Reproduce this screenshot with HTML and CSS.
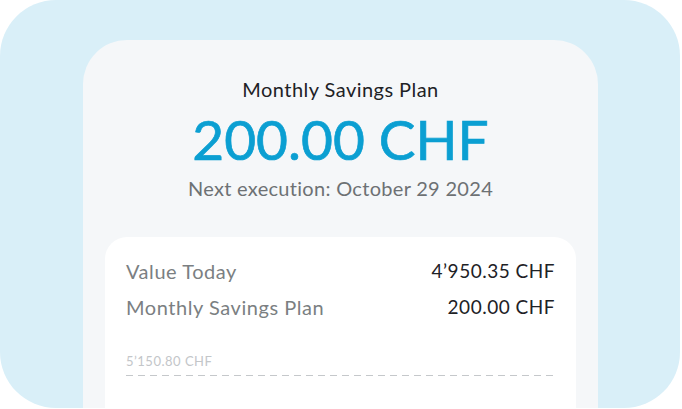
FILE: index.html
```html
<!DOCTYPE html>
<html>
<head>
<meta charset="utf-8">
<link rel="stylesheet" href="styles.css">
</head>
<body>
<div class="frame">
  <div class="phone">
    <div class="header">
      <div class="title">Monthly Savings Plan</div>
      <div class="amount">200.00 CHF</div>
      <div class="next">Next execution: October 29 2024</div>
    </div>
    <div class="card">
      <div class="row">
        <span class="label">Value Today</span>
        <span class="value">4’950.35 CHF</span>
      </div>
      <div class="row">
        <span class="label">Monthly Savings Plan</span>
        <span class="value">200.00 CHF</span>
      </div>
      <div class="chart">
        <div class="chart-label">5’150.80 CHF</div>
        <div class="dash"></div>
      </div>
    </div>
  </div>
</div>
</body>
</html>
```
FILE: styles.css
```css
* { box-sizing: border-box; }
html, body { margin: 0; padding: 0; background: #ffffff; }
body {
  font-family: "Lato", "Open Sans", sans-serif;
  width: 682px;
  height: 409px;
  overflow: hidden;
}
.frame {
  width: 680px;
  height: 408px;
  background: #d9eff8;
  border-radius: 56px;
  overflow: hidden;
  padding: 40px 0 0 83px;
}
.phone {
  width: 515px;
  height: 368px;
  background: #f5f7f9;
  border-radius: 44px 44px 0 0;
  padding: 0 22px;
}
.header {
  display: flex;
  flex-direction: column;
  align-items: center;
  padding-top: 37px;
  height: 197px;
}
.title {
  font-size: 20px;
  line-height: 24px;
  letter-spacing: 0.45px;
  color: #1e2226;
}
.amount {
  font-size: 55px;
  line-height: 62px;
  color: #0b9fd2;
  -webkit-text-stroke: 0.7px #0b9fd2;
  margin-top: 7px;
}
.next {
  font-size: 20px;
  line-height: 24px;
  letter-spacing: 0.3px;
  color: #6d7174;
  margin-top: 6px;
}
.card {
  background: #ffffff;
  border-radius: 22px 22px 0 0;
  height: 171px;
  padding: 22px 21px 0 21px;
}
.row {
  display: flex;
  justify-content: space-between;
  font-size: 20px;
  line-height: 24px;
  margin-bottom: 12px;
}
.label { color: #7b7f82; letter-spacing: 0.55px; }
.value { color: #1e2226; font-size: 19px; letter-spacing: 0.5px; }
.chart { padding-top: 22px; }
.chart-label {
  font-size: 13px;
  line-height: 16px;
  letter-spacing: 0.5px;
  color: #c3c6c9;
}
.dash {
  margin-top: 6px;
  height: 1px;
  background: repeating-linear-gradient(to right, #c5c8cb 0 7px, transparent 7px 12px);
}
```
